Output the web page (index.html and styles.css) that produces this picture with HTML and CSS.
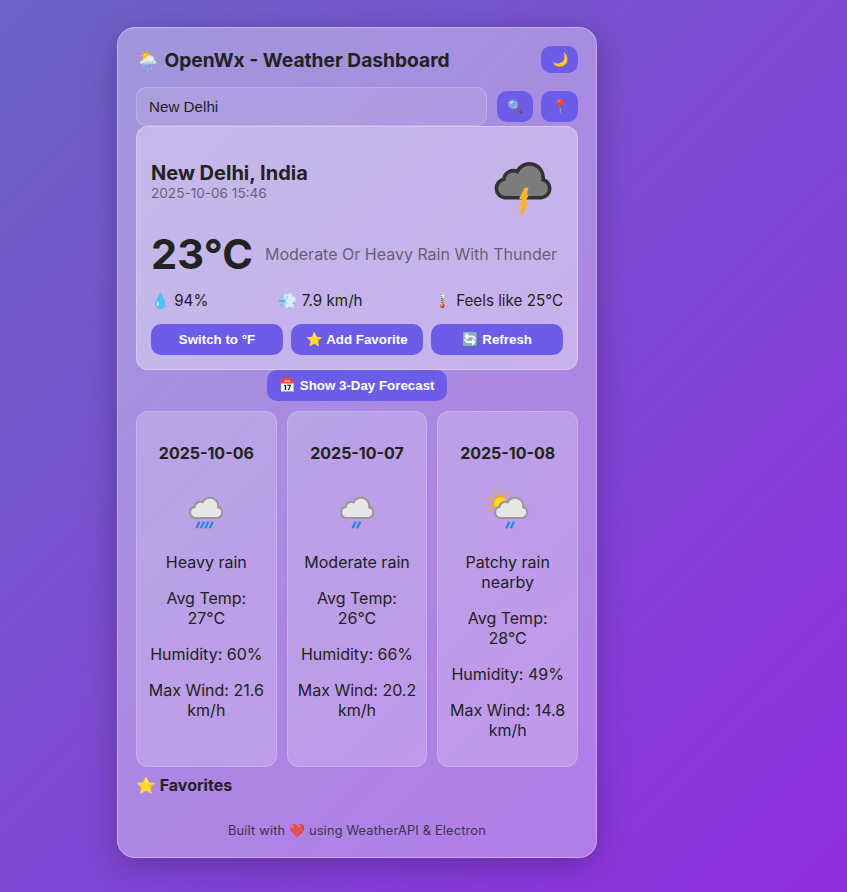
FILE: index.html
```html
<!DOCTYPE html>
<html lang="en">
<head>
<meta charset="utf-8">
<title>OpenWx - Weather Dashboard</title>
<link rel="stylesheet" href="styles.css">
</head>
<body>
<svg class="defs" aria-hidden="true">
  <symbol id="cloud" viewBox="0 0 80 80"><path d="M21.5 56.7H58.5A9.2 9.2 0 0 0 60 38.7A13.7 13.7 0 0 0 34.2 30.5A9.6 9.6 0 0 0 20.8 38.2A9.4 9.4 0 0 0 21.5 56.7Z"/></symbol>
</svg>
<main class="app">
  <header class="header">
    <h1>🌦️ OpenWx - Weather Dashboard</h1>
    <button class="btn theme">🌙</button>
  </header>
  <div class="search">
    <input type="text" value="New Delhi">
    <div class="search-actions">
      <button class="btn icon">🔍</button>
      <button class="btn icon pin">📍</button>
    </div>
  </div>
  <section class="weather">
    <div class="place">
      <div>
        <h2>New Delhi, India</h2>
        <div class="date">2025-10-06 15:46</div>
      </div>
      <svg class="now-icon" viewBox="0 0 80 80">
        <use href="#cloud" class="dark-cloud" width="80" height="80"/>
        <path class="bolt" d="M41.5 46.8L45.6 46.8L44 53.3L45.6 54.5L42.5 60.2L45 61.6L40 73.5H36.3L39 66L35.8 64.5L39.2 59L36.2 57.3Z"/>
      </svg>
    </div>
    <div class="reading"><span class="temp">23°C</span><span class="condition">Moderate Or Heavy Rain With Thunder</span></div>
    <div class="metrics"><span>💧 94%</span><span>💨 7.9 km/h</span><span>🌡️ Feels like 25°C</span></div>
    <div class="actions">
      <button class="btn">Switch to °F</button>
      <button class="btn">⭐ Add Favorite</button>
      <button class="btn">🔄 Refresh</button>
    </div>
  </section>
  <button class="btn toggle">📅 Show 3-Day Forecast</button>
  <section class="forecast">
    <article class="day">
      <h4>2025-10-06</h4>
      <svg viewBox="0 0 50 50">
        <use href="#cloud" class="light-cloud" x="1" y="-1.2" width="48.2" height="48.2"/>
        <path class="rain" d="M15.4 43.2l3.2-6.4M19.8 43.2l3.2-6.4M24.2 43.2l3.2-6.4M28.6 43.2l3.2-6.4"/>
      </svg>
      <p>Heavy rain</p><p>Avg Temp: 27°C</p><p>Humidity: 60%</p><p>Max Wind: 21.6 km/h</p>
    </article>
    <article class="day">
      <h4>2025-10-07</h4>
      <svg viewBox="0 0 50 50">
        <use href="#cloud" class="light-cloud" x="1" y="-1.2" width="48.2" height="48.2"/>
        <path class="rain" d="M20.4 43.2l3.2-6.4M25 43.2l3.2-6.4"/>
      </svg>
      <p>Moderate rain</p><p>Avg Temp: 26°C</p><p>Humidity: 66%</p><p>Max Wind: 20.2 km/h</p>
    </article>
    <article class="day">
      <h4>2025-10-08</h4>
      <svg viewBox="0 0 50 50">
        <circle class="sun" cx="17.5" cy="18.5" r="7"/>
        <path class="rays" d="M4.6 19h3.8M5.6 12.3l3.6 2M11.2 6.8l2.2 3.4M18.2 5v4M25.2 6.6l-1.7 3.2M5.5 26.2l3.6-1.8"/>
        <use href="#cloud" class="light-cloud" x="4" y="-1.2" width="48.2" height="48.2"/>
        <path class="rain" d="M23.2 43.2l3.2-6.4M27.8 43.2l3.2-6.4"/>
      </svg>
      <p>Patchy rain nearby</p><p>Avg Temp: 28°C</p><p>Humidity: 49%</p><p>Max Wind: 14.8 km/h</p>
    </article>
  </section>
  <h3 class="favorites">⭐ Favorites</h3>
  <footer>Built with ❤️ using WeatherAPI &amp; Electron</footer>
</main>
</body>
</html>
```
FILE: styles.css
```css
* { box-sizing: border-box; }
body {
  margin: 0;
  height: 892px;
  padding: 27px 0 0 117px;
  overflow: hidden;
  font-family: Inter, "Noto Color Emoji", sans-serif;
  font-size: 16px;
  line-height: 20px;
  color: #222;
  background: linear-gradient(135deg, #6c63c7, #902fe0);
}
h1, h2, h3, h4 { margin: 0; }
.defs { position: absolute; width: 0; height: 0; }
.app {
  width: 480px;
  height: 831px;
  padding: 18px;
  display: flex;
  flex-direction: column;
  border: 1px solid rgba(255,255,255,.3);
  border-radius: 18px;
  background: rgba(255,255,255,.35);
  box-shadow: 0 8px 32px rgba(0,0,0,.25);
}
.app > * { flex-shrink: 0; }
.header {
  height: 27px;
  margin-bottom: 14px;
  display: flex;
  align-items: center;
  justify-content: space-between;
}
h1 { font-size: 19.2px; line-height: 27px; padding-top: 2px; white-space: nowrap; }
.btn {
  height: 31px;
  padding: 0;
  border: 0;
  border-radius: 10px;
  background: #6c5ce7;
  color: #fff;
  font: bold 13.333px "Liberation Sans", "Noto Color Emoji", sans-serif;
}
.theme { width: 37px; height: 27px; padding-left: 2px; }
.search { height: 39px; display: flex; align-items: center; gap: 10px; }
.search input {
  flex: 1;
  min-width: 0;
  height: 39px;
  padding: 0 12px;
  border: 1px solid rgba(255,255,255,.2);
  border-radius: 10px;
  background: rgba(255,255,255,.1);
  color: #222;
  font: 15.2px "Liberation Sans", sans-serif;
}
.search-actions { display: flex; gap: 8px; }
.icon { width: 36px; padding-left: 1px; }
.pin { width: 37px; padding-left: 2px; }
.weather {
  height: 244px;
  padding: 14px;
  border: 1px solid rgba(255,255,255,.3);
  border-radius: 12px;
  background: rgba(255,255,255,.35);
}
.place { height: 80px; display: flex; align-items: center; justify-content: space-between; }
h2 { font-size: 20px; line-height: 24px; }
.date { font-size: 13.6px; line-height: 16px; color: rgba(34,34,34,.6); }
.now-icon { width: 80px; height: 80px; }
.dark-cloud { fill: #7b7d7d; stroke: #333; stroke-width: 3.6; }
.light-cloud { fill: #e6e6e6; stroke: #999; stroke-width: 3.6; }
.bolt { fill: #fbb02a; }
.rain { fill: none; stroke: #2b83df; stroke-width: 2.2; }
.sun { fill: #ffdc20; stroke: #ffa51c; stroke-width: 1.4; }
.rays { fill: none; stroke: #ffa51c; stroke-width: 1.7; }
.reading { height: 51px; margin-top: 7px; display: flex; align-items: center; gap: 12px; }
.temp { font-size: 41.6px; line-height: 50px; font-weight: 700; }
.condition { color: rgba(34,34,34,.6); white-space: nowrap; }
.metrics { margin: 12px 0 13px; height: 20px; display: flex; justify-content: space-between; font-size: 15.2px; white-space: nowrap; }
.actions { display: grid; grid-template-columns: repeat(3, 1fr); gap: 8px; }
.toggle { width: 180px; align-self: center; }
.forecast { margin-top: 10px; height: 356px; display: grid; grid-template-columns: repeat(3, 1fr); gap: 10px; }
.day {
  padding: 31px 10px 0;
  text-align: center;
  border: 1px solid rgba(255,255,255,.2);
  border-radius: 12px;
  background: rgba(255,255,255,.2);
}
.day h4 { font-size: 16px; line-height: 20px; }
.day svg { display: block; width: 50px; height: 50px; margin: 21.6px auto 17.4px; }
.day p { margin: 0 0 16px; }
.favorites { margin-top: 8px; font-size: 16px; line-height: 20px; }
footer { margin-top: 27px; text-align: center; font-size: 12.8px; letter-spacing: .18px; line-height: 18px; opacity: .8; }
```
